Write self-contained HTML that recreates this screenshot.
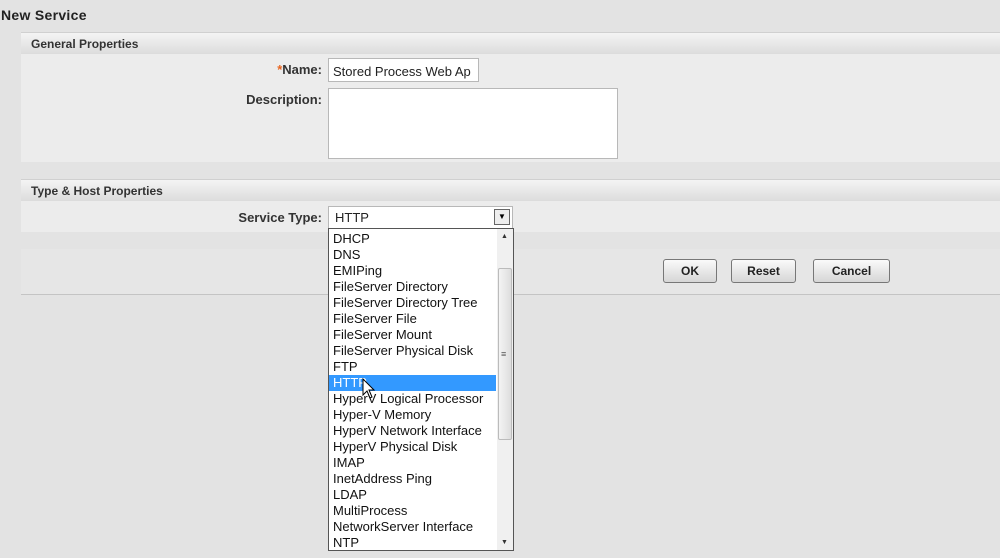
<!DOCTYPE html><html><head><style>
body{margin:0;width:1000px;height:558px;background:#e3e3e3;font-family:"Liberation Sans",Arial,sans-serif;position:relative;overflow:hidden}
.a{position:absolute}
.hd{left:21px;right:0;height:21px;background:linear-gradient(#f4f4f4,#dcdcdc);border-top:1px solid #d0d0d0;font-size:12px;font-weight:bold;color:#333;line-height:22px;padding-left:10px}
.lb{font-size:13px;font-weight:bold;color:#333;text-align:right;width:300px}
.in{background:#fff;border:1px solid #b8b8b8;box-sizing:border-box;font-size:13px;color:#222}
.btn{height:24px;top:259px;box-sizing:border-box;border:1px solid #777;border-radius:3px;background:linear-gradient(#fafafa,#d6d6d6);font-size:12px;font-weight:bold;color:#222;text-align:center;line-height:23px}
.it{height:16px;line-height:16px;font-size:13px;color:#111;padding-left:4px;white-space:nowrap}
</style></head><body>
<div class="a" style="left:1px;top:7px;font-size:14px;font-weight:bold;color:#222;letter-spacing:.3px">New Service</div>
<div class="a hd" style="top:32px">General Properties</div>
<div class="a" style="left:21px;right:0;top:54px;height:108px;background:#ececec"></div>
<div class="a lb" style="left:22px;top:62px"><span style="color:#e8641e">*</span>Name:</div>
<div class="a in" style="left:328px;top:58px;width:151px;height:24px;padding:5px 4px;line-height:15px">Stored Process Web Ap</div>
<div class="a lb" style="left:22px;top:92px">Description:</div>
<div class="a in" style="left:328px;top:88px;width:290px;height:71px"></div>
<div class="a hd" style="top:179px">Type &amp; Host Properties</div>
<div class="a" style="left:21px;right:0;top:201px;height:31px;background:#ececec"></div>
<div class="a lb" style="left:22px;top:210px">Service Type:</div>
<div class="a in" style="left:328px;top:206px;width:185px;height:23px;padding:3px 6px;line-height:16px">HTTP</div>
<div class="a" style="left:494px;top:209px;width:16px;height:16px;border:1px solid #666;box-sizing:border-box;background:#eee;font-size:8px;text-align:center;line-height:14px">▼</div>
<div class="a" style="left:21px;right:0;top:249px;height:45px;background:#e6e6e6;border-bottom:1px solid #c4c4c4"></div>
<div class="a btn" style="left:663px;width:54px">OK</div>
<div class="a btn" style="left:731px;width:65px">Reset</div>
<div class="a btn" style="left:813px;width:77px">Cancel</div>
<div class="a" style="left:328px;top:228px;width:186px;height:323px;background:#fff;border:1px solid #555;box-sizing:border-box;padding-top:2px">
<div class="a" style="left:168px;top:0;width:16px;height:321px;background:#f0f0f0"></div>
<div class="a" style="left:172px;top:4px;font-size:7px;color:#333">▲</div>
<div class="a" style="left:172px;top:310px;font-size:7px;color:#333">▼</div>
<div class="a" style="left:169px;top:39px;width:14px;height:172px;background:linear-gradient(90deg,#f4f4f4,#ddd);border:1px solid #bbb;border-radius:2px;box-sizing:border-box"></div>
<div class="a" style="left:172px;top:120px;font-size:9px;color:#555">≡</div>
<div style="width:167px">
<div class="it">DHCP</div><div class="it">DNS</div><div class="it">EMIPing</div><div class="it">FileServer Directory</div><div class="it">FileServer Directory Tree</div><div class="it">FileServer File</div><div class="it">FileServer Mount</div><div class="it">FileServer Physical Disk</div><div class="it">FTP</div><div class="it" style="background:#3399ff;color:#fff">HTTP</div><div class="it">HyperV Logical Processor</div><div class="it">Hyper-V Memory</div><div class="it">HyperV Network Interface</div><div class="it">HyperV Physical Disk</div><div class="it">IMAP</div><div class="it">InetAddress Ping</div><div class="it">LDAP</div><div class="it">MultiProcess</div><div class="it">NetworkServer Interface</div><div class="it">NTP</div>
</div></div>
<svg class="a" style="left:362px;top:378px" width="14" height="22" viewBox="0 0 14 22"><path d="M1 1V17L5 13L8 20L10 19L7 12H12Z" fill="#fff" stroke="#000" stroke-width="1"/></svg>
</body></html>
